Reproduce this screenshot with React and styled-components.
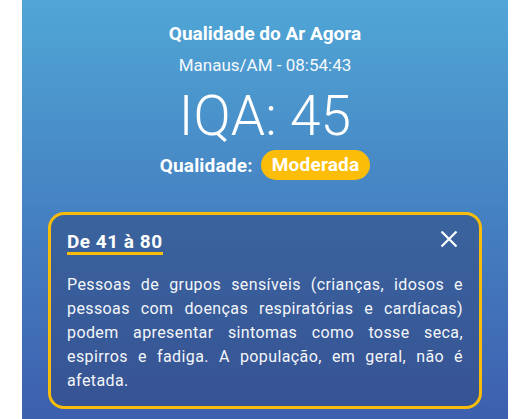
import React from "react";
import styled, { createGlobalStyle } from "styled-components";

const GlobalStyle = createGlobalStyle`
  html, body {
    margin: 0;
    padding: 0;
    background: #ffffff;
    font-family: Roboto, "Liberation Sans", sans-serif;
  }
  * {
    box-sizing: border-box;
  }
`;

const Page = styled.div`
  padding: 0 20px 0 22px;
  height: 419px;
  overflow: hidden;
`;

const Panel = styled.main`
  height: 100%;
  background: linear-gradient(180deg, #50a6d6 0%, #4582c2 50%, #3d5fae 100%);
  padding: 23px 26px 0;
  display: flex;
  flex-direction: column;
  align-items: center;
  color: #ffffff;
`;

const Title = styled.h1`
  margin: 0;
  font-size: 19px;
  line-height: 22px;
  font-weight: 700;
`;

const Place = styled.p`
  margin: 10px 0 0;
  font-size: 17px;
  line-height: 20px;
  font-weight: 400;
  opacity: 0.95;
`;

const Index = styled.div`
  margin-top: 8px;
  font-size: 55px;
  line-height: 66px;
  font-weight: 300;
`;

const QualityRow = styled.div`
  margin-top: 1px;
  display: flex;
  align-items: center;
  gap: 8px;
  font-size: 19px;
  font-weight: 700;
  letter-spacing: 0.2px;
`;

const Badge = styled.span`
  background: ${(props) => props.color};
  border-radius: 15px;
  height: 30px;
  line-height: 30px;
  padding: 0 11px;
`;

const Card = styled.section`
  margin-top: 32px;
  width: 100%;
  border: 3px solid #f8bd0b;
  border-radius: 16px;
  background: rgba(48, 70, 122, 0.5);
  padding: 17px 16px 13px;
`;

const CardHead = styled.div`
  display: flex;
  justify-content: space-between;
  align-items: flex-start;
`;

const Range = styled.h2`
  margin: 0;
  font-size: 19px;
  line-height: 20px;
  font-weight: 700;
  letter-spacing: 0.5px;
  border-bottom: 3px solid #f8bd0b;
`;

const Close = styled.button`
  border: 0;
  background: none;
  padding: 0;
  margin: -2px 5px 0 0;
  width: 18px;
  height: 18px;
  display: flex;
  color: #ffffff;
`;

const Text = styled.p`
  margin: 18px 0 0;
  font-size: 16px;
  line-height: 24px;
  letter-spacing: 0.4px;
  text-align: justify;
  opacity: 0.95;
`;

export default function App() {
  return (
    <>
      <GlobalStyle />
      <Page>
        <Panel>
          <Title>Qualidade do Ar Agora</Title>
          <Place>Manaus/AM - 08:54:43</Place>
          <Index>IQA: 45</Index>
          <QualityRow>
            Qualidade:
            <Badge color="#fbbd08">Moderada</Badge>
          </QualityRow>
          <Card>
            <CardHead>
              <Range>De 41 à 80</Range>
              <Close aria-label="Fechar">
                <svg width="18" height="18" viewBox="0 0 18 18">
                  <path
                    d="M1.5 1.5 L16.5 16.5 M16.5 1.5 L1.5 16.5"
                    stroke="currentColor"
                    strokeWidth="2.2"
                  />
                </svg>
              </Close>
            </CardHead>
            <Text>
              Pessoas de grupos sensíveis (crianças, idosos e pessoas com
              doenças respiratórias e cardíacas) podem apresentar sintomas como
              tosse seca, espirros e fadiga. A população, em geral, não é
              afetada.
            </Text>
          </Card>
        </Panel>
      </Page>
    </>
  );
}
